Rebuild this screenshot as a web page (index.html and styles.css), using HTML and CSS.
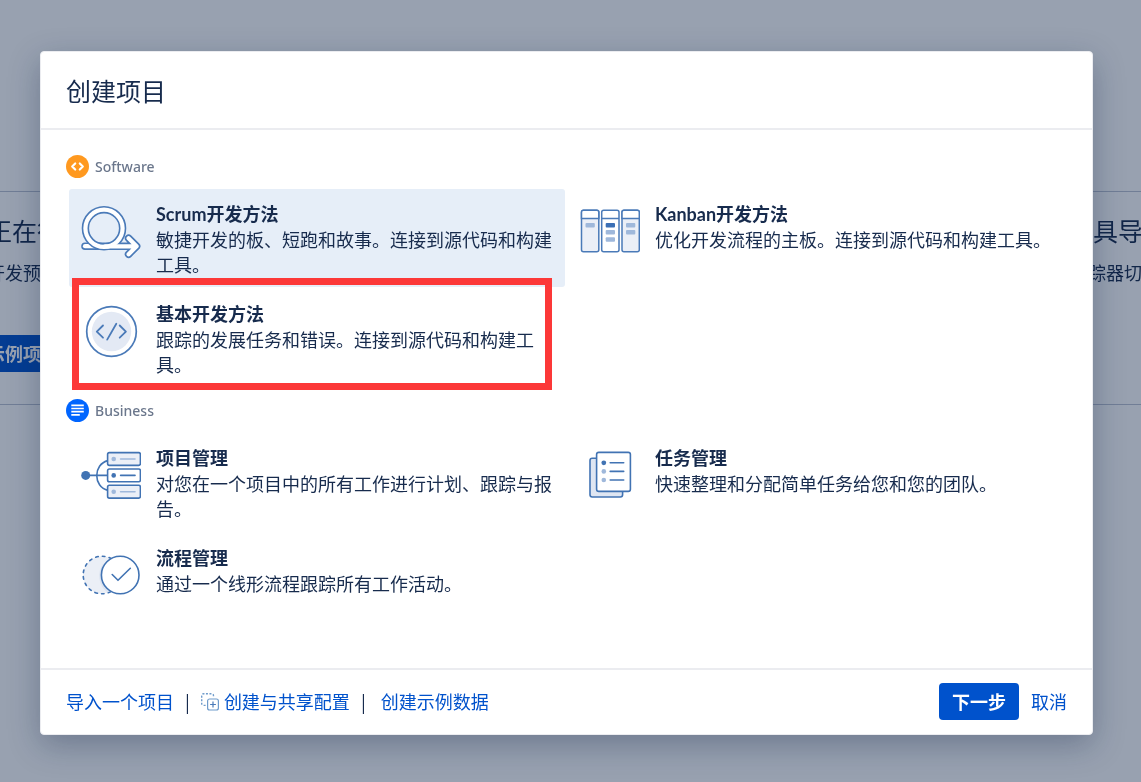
FILE: index.html
```html
<!DOCTYPE html>
<html lang="zh-Hans">
<head>
  <meta charset="UTF-8" />
  <meta name="viewport" content="width=device-width, initial-scale=1.0"/>
  <title>创建项目</title>
  <link rel="stylesheet" href="styles.css">
</head>
<body>
  <!-- page behind the dialog -->
  <div class="page" aria-hidden="true">
    <div class="page-row">
      <div class="page-panel panel-left">
        <div class="panel-title">正在行</div>
        <div class="panel-text">开发预</div>
        <div class="panel-button">示例项</div>
      </div>
      <div class="page-panel panel-right">
        <div class="panel-title">具导</div>
        <div class="panel-text">踪器切</div>
      </div>
    </div>
  </div>

  <div class="backdrop">
    <div class="dialog" role="dialog" aria-labelledby="dialogTitle">
      <header class="dialog-header">
        <h1 id="dialogTitle">创建项目</h1>
      </header>

      <div class="dialog-body">
        <section>
          <h2 class="group-title">
            <svg width="23" height="23" viewBox="0 0 23 23" fill="none">
              <circle cx="11.5" cy="11.5" r="11.5" fill="#ff991f"/>
              <path d="M9.2 8.5L6.2 11.5l3 3M13.8 8.5l3 3-3 3" stroke="#fff" stroke-width="2.2" stroke-linecap="round" stroke-linejoin="round"/>
            </svg>
            Software
          </h2>
          <div class="templates">
            <div class="template selected">
              <svg class="template-icon" viewBox="0 0 60 60" fill="none" stroke-linecap="round" stroke-linejoin="round">
                <path d="M4 44.2H55.5M47.6 36.2l8 8-8 8" stroke="#4a7ab8" stroke-width="7.6"/>
                <path d="M4 44.2H24" stroke="#fff" stroke-width="4.2"/>
                <circle cx="23" cy="26.3" r="18.6" stroke="#4a7ab8" stroke-width="7.4"/>
                <circle cx="23" cy="26.3" r="18.6" stroke="#fff" stroke-width="4.2"/>
                <path d="M24 44.4H55.5M47.6 36.2l8 8-8 8" stroke="#fff" stroke-width="4.2"/>
              </svg>
              <div class="template-text">
                <h3>Scrum开发方法</h3>
                <p>敏捷开发的板、短跑和故事。连接到源代码和构建工具。</p>
              </div>
            </div>
            <div class="template">
              <svg class="template-icon" viewBox="0 0 60 60" fill="#ebeff7" stroke="#4a7ab8" stroke-width="1.5">
                <rect x="1.5" y="8.2" width="17.3" height="41.6" rx="2"/>
                <rect x="21.7" y="8.2" width="17.3" height="41.6" rx="2" fill="#fff"/>
                <rect x="42" y="8.2" width="17.3" height="41.6" rx="2"/>
                <path d="M1.5 16.4v-6.2a2 2 0 0 1 2-2h13.3a2 2 0 0 1 2 2v6.2zM42 16.4v-6.2a2 2 0 0 1 2-2h13.3a2 2 0 0 1 2 2v6.2zM21.7 16.4H39" fill="#fff"/>
                <g stroke="none" fill="#9fb8db">
                  <rect x="5.5" y="21" width="9.3" height="4.6" rx="1"/>
                  <rect x="25.7" y="21" width="9.3" height="4.6" rx="1" fill="#3b6fb5"/>
                  <rect x="25.7" y="28" width="9.3" height="4.6" rx="1"/>
                  <rect x="25.7" y="35.2" width="9.3" height="4.6" rx="1"/>
                  <rect x="46" y="21" width="9.3" height="4.6" rx="1"/>
                  <rect x="46" y="28" width="9.3" height="4.6" rx="1"/>
                </g>
              </svg>
              <div class="template-text">
                <h3>Kanban开发方法</h3>
                <p>优化开发流程的主板。连接到源代码和构建工具。</p>
              </div>
            </div>
            <div class="template marked">
              <svg class="template-icon" viewBox="0 0 60 60" fill="none" stroke="#4a7ab8" stroke-linecap="round" stroke-linejoin="round">
                <circle cx="30.5" cy="29.5" r="24.8" stroke-width="1.7" fill="#fff"/>
                <circle cx="30.5" cy="29.5" r="19.7" fill="#e3e9f4" stroke="none"/>
                <path d="M22 23.5l-6.2 6.1 6.2 6.1M35.3 21.8L26.2 37.6M38.7 23.5l6.2 6.1-6.2 6.1" stroke-width="1.8"/>
              </svg>
              <div class="template-text">
                <h3>基本开发方法</h3>
                <p>跟踪的发展任务和错误。连接到源代码和构建工具。</p>
              </div>
            </div>
          </div>
        </section>

        <section>
          <h2 class="group-title">
            <svg width="23" height="23" viewBox="0 0 23 23" fill="none">
              <circle cx="11.5" cy="11.5" r="11.5" fill="#0065ff"/>
              <path d="M5.3 6.3h12.5M5.3 9.5h12.5M5.3 12.7h12.5M5.3 15.9h8.5" stroke="#fff" stroke-width="1.7"/>
            </svg>
            Business
          </h2>
          <div class="templates">
            <div class="template">
              <svg class="template-icon" viewBox="0 0 60 60" fill="none" stroke="#4173b3" stroke-width="1.6" stroke-linecap="round">
                <circle cx="4.7" cy="29.4" r="4.5" fill="#4173b3" stroke="none"/>
                <path d="M5 29.4h22M27 14.6C12 18 12 41 27 44.4"/>
                <rect x="26.6" y="6.6" width="32.8" height="12.8" rx="1.8" fill="#ebeff7"/>
                <rect x="26.6" y="23" width="32.8" height="12.8" rx="1.8" fill="#fff"/>
                <rect x="26.6" y="39.3" width="32.8" height="12.8" rx="1.8" fill="#ebeff7"/>
                <g stroke="none" fill="#9fb8db">
                  <circle cx="32.7" cy="13" r="2.3"/>
                  <circle cx="32.7" cy="29.4" r="2.3" fill="#4173b3"/>
                  <circle cx="32.7" cy="45.7" r="2.3"/>
                </g>
                <path d="M39.6 13H54M39.6 45.7H54" stroke="#9fb8db"/>
                <path d="M39.6 29.4H54"/>
              </svg>
              <div class="template-text">
                <h3>项目管理</h3>
                <p>对您在一个项目中的所有工作进行计划、跟踪与报告。</p>
              </div>
            </div>
            <div class="template">
              <svg class="template-icon" viewBox="0 0 60 60" fill="#fff" stroke="#4173b3" stroke-width="1.6" stroke-linecap="round">
                <rect x="10" y="12.2" width="32.6" height="38.8" rx="2.2" fill="#dfe6f2"/>
                <rect x="16.6" y="6.4" width="33.8" height="39" rx="2.2"/>
                <g stroke="none" fill="#9fb8db">
                  <circle cx="23.8" cy="16.8" r="2.4" fill="#4173b3"/>
                  <circle cx="23.8" cy="25.4" r="2.3"/>
                  <circle cx="23.8" cy="34" r="2.3"/>
                </g>
                <path d="M30.2 16.8h13.5M30.2 25.4h13.5M30.2 34h13.5"/>
              </svg>
              <div class="template-text">
                <h3>任务管理</h3>
                <p>快速整理和分配简单任务给您和您的团队。</p>
              </div>
            </div>
            <div class="template">
              <svg class="template-icon" viewBox="0 0 60 60" fill="none" stroke="#4173b3" stroke-width="1.6" stroke-linecap="round" stroke-linejoin="round">
                <circle cx="21" cy="29" r="18.8" fill="#ebeff6" stroke-dasharray="2.6 4.2"/>
                <path d="M22 18A20.5 20.5 0 0 0 26 46L33 44V18z" fill="#dce4f1" stroke="none"/>
                <circle cx="39.2" cy="29" r="18.8" fill="#fff"/>
                <path d="M31.2 28.5l5.8 5.8 12.3-12"/>
              </svg>
              <div class="template-text">
                <h3>流程管理</h3>
                <p>通过一个线形流程跟踪所有工作活动。</p>
              </div>
            </div>
          </div>
        </section>
      </div>

      <footer class="dialog-footer">
        <div class="footer-links">
          <a href="#">导入一个项目</a>
          <span class="divider">|</span>
          <a href="#" class="icon-link">
            <svg width="18" height="18" viewBox="0 0 18 18" fill="none" stroke="#6f9bcb" stroke-width="1.4">
              <path d="M4.6 12.4H2.7a2 2 0 0 1-2-2V2.7a2 2 0 0 1 2-2h7.8a2 2 0 0 1 2 2v2" stroke-dasharray="2 1.5"/>
              <rect x="6.6" y="6" width="10.8" height="11" rx="2" stroke-width="1.2"/>
              <path d="M12 8.6v5.8M9.1 11.5h5.8" stroke="#4a7ab8" stroke-width="1.2"/>
            </svg>
            创建与共享配置
          </a>
          <span class="divider">|</span>
          <a href="#" class="last-link">创建示例数据</a>
        </div>
        <div class="footer-actions">
          <button type="button" class="button-primary">下一步</button>
          <a href="#">取消</a>
        </div>
      </footer>
    </div>
  </div>
</body>
</html>
```
FILE: styles.css
```css
* {
  box-sizing: border-box;
}

body {
  margin: 0;
  font-family: "Noto Sans CJK SC", sans-serif;
  font-size: 18px;
  line-height: 25px;
  color: #172b4d;
  background-color: #fff;
}

h1, h2, h3, p {
  margin: 0;
}

a {
  color: #0052cc;
  text-decoration: none;
}

a:hover {
  text-decoration: underline;
}

/* page behind the dialog */
.page {
  position: fixed;
  inset: 0;
  padding-top: 191px;
  overflow: hidden;
}

.page-row {
  display: flex;
  justify-content: space-between;
  height: 214px;
  padding-top: 20px;
  border-top: 1px solid #bcc3d2;
  border-bottom: 1px solid #bcc3d2;
}

.page-panel {
  width: 48px;
  white-space: nowrap;
}

.panel-left .panel-title,
.panel-left .panel-text,
.panel-left .panel-button {
  text-indent: -13px;
}

.panel-title {
  font-size: 25px;
  line-height: 36px;
}

.panel-text {
  margin-top: 12px;
}

.panel-right .panel-text {
  text-indent: -5px;
}

.panel-button {
  margin-top: 50px;
  line-height: 37px;
  font-weight: bold;
  color: #fff;
  background-color: #0052cc;
}

/* dialog */
.backdrop {
  position: relative;
  display: flex;
  min-height: 100vh;
  padding: 51px 48px 47px 40px;
  background-color: rgba(9, 30, 66, 0.42);
}

.dialog {
  flex: 1;
  display: flex;
  flex-direction: column;
  border: 1px solid #ebecf0;
  border-radius: 4px;
  background-color: #fff;
  box-shadow: 0 10px 32px rgba(9, 30, 66, 0.3);
}

.dialog-header {
  padding: 22px 25px;
  border-bottom: 2px solid #ebecf0;
}

.dialog-header h1 {
  font-size: 25px;
  line-height: 32px;
  font-weight: normal;
}

.dialog-body {
  flex: 1;
  padding: 25px 28px 0 25px;
}

.group-title {
  display: flex;
  align-items: center;
  gap: 6px;
  height: 23px;
  font-family: "Noto Sans", sans-serif;
  font-size: 14px;
  font-weight: 500;
  color: #6b778c;
}

.templates {
  display: grid;
  grid-template-columns: repeat(2, 1fr);
  gap: 2px 3px;
  margin: 11px 0 12px 3px;
}

.template {
  position: relative;
  display: flex;
  gap: 15px;
  padding: 13px 12px 10px;
  border-radius: 3px;
  cursor: pointer;
}

.template.selected {
  background-color: #e6eef8;
}

.template-icon {
  flex: none;
  width: 60px;
  height: 60px;
}

.template h3 {
  font-family: Lato, "Noto Sans CJK SC", sans-serif;
  font-size: 18px;
  line-height: 25px;
}

/* red frame lies over the neighbouring rows */
.marked::after {
  content: "";
  position: absolute;
  inset: -11px 13px -3px 3px;
  border: 7px solid #fc3838;
}

.dialog-footer {
  display: flex;
  justify-content: space-between;
  align-items: center;
  padding: 13px 25px 14px;
  border-top: 2px solid #ebecf0;
}

.footer-links,
.footer-actions,
.icon-link {
  display: flex;
  align-items: center;
}

.footer-links {
  gap: 11px;
}

.footer-actions {
  gap: 12px;
}

.icon-link {
  gap: 5px;
}

.last-link {
  margin-left: 4px;
}

.button-primary {
  height: 37px;
  padding: 0 13px;
  border: none;
  border-radius: 4px;
  font: inherit;
  font-weight: bold;
  color: #fff;
  background-color: #0052cc;
  cursor: pointer;
}

.button-primary:hover {
  background-color: #0065ff;
}
```
